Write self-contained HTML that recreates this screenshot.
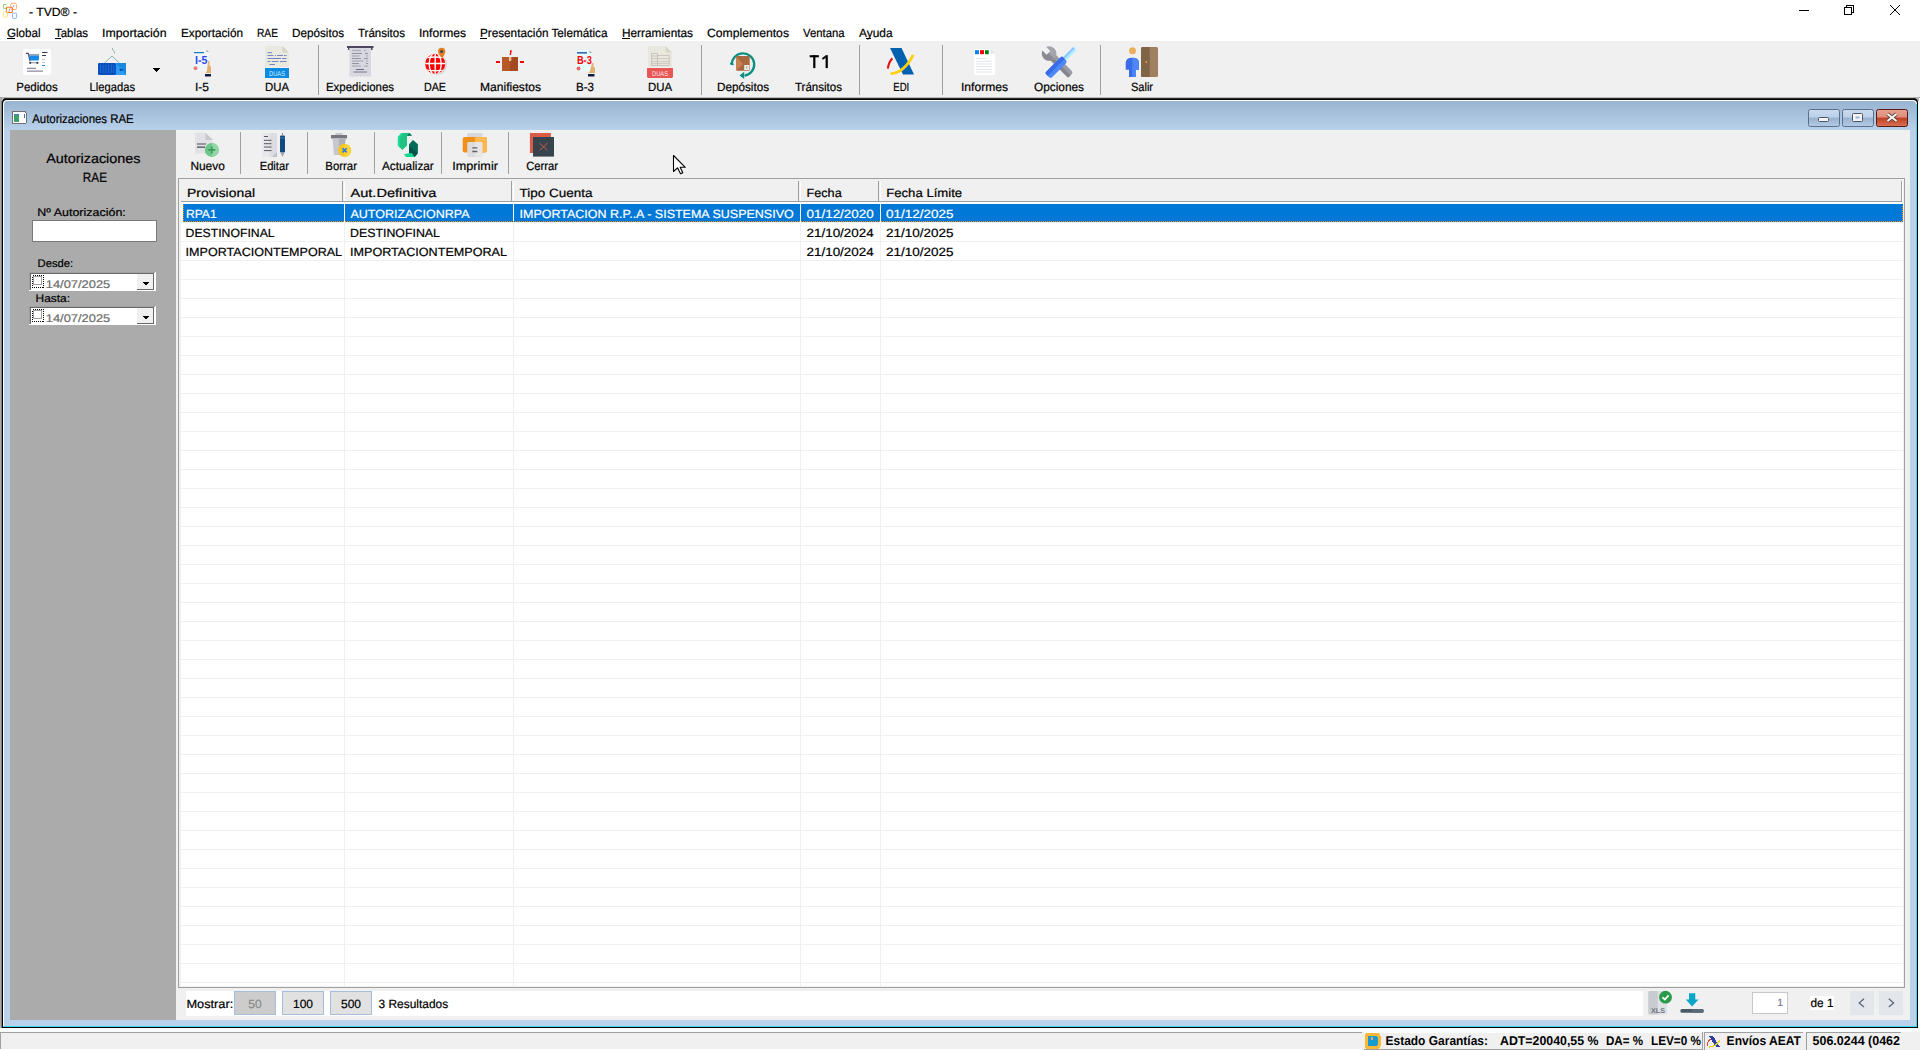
<!DOCTYPE html>
<html><head><meta charset="utf-8"><title>TVD</title>
<style>
html,body{margin:0;padding:0;background:#ababab;overflow:hidden}
svg{display:block;font-family:"Liberation Sans",sans-serif}
</style></head><body>
<svg width="1920" height="1050" viewBox="0 0 1920 1050" shape-rendering="crispEdges" text-rendering="geometricPrecision">
<defs><linearGradient id="cap" x1="0" y1="0" x2="0" y2="1"><stop offset="0" stop-color="#99b4d1"/><stop offset="1" stop-color="#b9d1ea"/></linearGradient><linearGradient id="btnb" x1="0" y1="0" x2="0" y2="1"><stop offset="0" stop-color="#c9dbee"/><stop offset="0.45" stop-color="#bcd0e8"/><stop offset="0.5" stop-color="#98b2cf"/><stop offset="1" stop-color="#b3cbe6"/></linearGradient><linearGradient id="btnr" x1="0" y1="0" x2="0" y2="1"><stop offset="0" stop-color="#e8a291"/><stop offset="0.45" stop-color="#dd8d78"/><stop offset="0.5" stop-color="#c03f1f"/><stop offset="1" stop-color="#d8745a"/></linearGradient></defs>
<rect x="0" y="0" width="1920" height="41" fill="#ffffff" />
<rect x="0" y="41" width="1920" height="56" fill="#f0f0f0" />
<rect x="0" y="97" width="1920" height="953" fill="#ababab" />
<rect x="0" y="97" width="1920" height="1" fill="#a0a0a0" />
<rect x="1918" y="98" width="2" height="932" fill="#ffffff" />
<rect x="1" y="101" width="1" height="927" fill="#808080" />
<g fill="none" stroke-width="0.9" shape-rendering="geometricPrecision"><path d="M6.5 4.5 H3.5 V8.5 H6" stroke="#8ad460"/><rect x="10.8" y="3.3" width="5.6" height="6.2" rx="1.2" stroke="#ffa060"/><rect x="6.5" y="7.3" width="5.8" height="5.2" rx="0.5" stroke="#ff7a30" stroke-width="1.1"/><rect x="3.3" y="11.6" width="4.2" height="5.6" rx="0.8" stroke="#ffe070"/><rect x="12.5" y="13.1" width="4.1" height="5.2" rx="0.6" stroke="#86acf0"/><path d="M13 6 H14.2 M9 9.3 H10 M8.5 11 H9.5" stroke="#555"/></g>
<text x="29" y="16" font-size="12" fill="#000" textLength="48" lengthAdjust="spacingAndGlyphs" stroke="#000" stroke-width="0.2" >- TVD® -</text>
<rect x="1799" y="10" width="10" height="1" fill="#000" />
<g fill="none" stroke="#000" stroke-width="1" shape-rendering="crispEdges"><rect x="1844.5" y="7.5" width="7" height="7"/><path d="M1846.5 7.5 V5.5 H1853.5 V12.5 H1851.5"/></g>
<path d="M1890 5 L1900 15 M1900 5 L1890 15" stroke="#000" stroke-width="1.1"/>
<text x="7" y="37" font-size="12" fill="#000" textLength="33.5" lengthAdjust="spacingAndGlyphs" stroke="#000" stroke-width="0.2" >Global</text>
<text x="55" y="37" font-size="12" fill="#000" textLength="33" lengthAdjust="spacingAndGlyphs" stroke="#000" stroke-width="0.2" >Tablas</text>
<text x="102" y="37" font-size="12" fill="#000" textLength="64.5" lengthAdjust="spacingAndGlyphs" stroke="#000" stroke-width="0.2" >Importación</text>
<text x="181" y="37" font-size="12" fill="#000" textLength="62" lengthAdjust="spacingAndGlyphs" stroke="#000" stroke-width="0.2" >Exportación</text>
<text x="257" y="37" font-size="12" fill="#000" textLength="21" lengthAdjust="spacingAndGlyphs" stroke="#000" stroke-width="0.2" >RAE</text>
<text x="292" y="37" font-size="12" fill="#000" textLength="52" lengthAdjust="spacingAndGlyphs" stroke="#000" stroke-width="0.2" >Depósitos</text>
<text x="358" y="37" font-size="12" fill="#000" textLength="47" lengthAdjust="spacingAndGlyphs" stroke="#000" stroke-width="0.2" >Tránsitos</text>
<text x="419" y="37" font-size="12" fill="#000" textLength="47" lengthAdjust="spacingAndGlyphs" stroke="#000" stroke-width="0.2" >Informes</text>
<text x="480" y="37" font-size="12" fill="#000" textLength="127.5" lengthAdjust="spacingAndGlyphs" stroke="#000" stroke-width="0.2" >Presentación Telemática</text>
<text x="622" y="37" font-size="12" fill="#000" textLength="71" lengthAdjust="spacingAndGlyphs" stroke="#000" stroke-width="0.2" >Herramientas</text>
<text x="707" y="37" font-size="12" fill="#000" textLength="82" lengthAdjust="spacingAndGlyphs" stroke="#000" stroke-width="0.2" >Complementos</text>
<text x="803" y="37" font-size="12" fill="#000" textLength="41.5" lengthAdjust="spacingAndGlyphs" stroke="#000" stroke-width="0.2" >Ventana</text>
<text x="859" y="37" font-size="12" fill="#000" textLength="33.5" lengthAdjust="spacingAndGlyphs" stroke="#000" stroke-width="0.2" >Ayuda</text>
<rect x="7" y="38" width="8" height="1" fill="#000" />
<rect x="55" y="38" width="6" height="1" fill="#000" />
<rect x="480" y="38" width="7" height="1" fill="#000" />
<rect x="622" y="38" width="8" height="1" fill="#000" />
<rect x="866" y="38" width="5" height="1" fill="#000" />
<rect x="318" y="45" width="1" height="50" fill="#a0a0a0" />
<rect x="701" y="45" width="1" height="50" fill="#a0a0a0" />
<rect x="859" y="45" width="1" height="50" fill="#a0a0a0" />
<rect x="942" y="45" width="1" height="50" fill="#a0a0a0" />
<rect x="1100" y="45" width="1" height="50" fill="#a0a0a0" />
<text x="16.25" y="91" font-size="12" fill="#000" textLength="41.5" lengthAdjust="spacingAndGlyphs" stroke="#000" stroke-width="0.2" >Pedidos</text>
<text x="89.6" y="91" font-size="12" fill="#000" textLength="45.4" lengthAdjust="spacingAndGlyphs" stroke="#000" stroke-width="0.2" >Llegadas</text>
<text x="195" y="91" font-size="12" fill="#000" textLength="14" lengthAdjust="spacingAndGlyphs" stroke="#000" stroke-width="0.2" >I-5</text>
<text x="265" y="91" font-size="12" fill="#000" textLength="24" lengthAdjust="spacingAndGlyphs" stroke="#000" stroke-width="0.2" >DUA</text>
<text x="326" y="91" font-size="12" fill="#000" textLength="68" lengthAdjust="spacingAndGlyphs" stroke="#000" stroke-width="0.2" >Expediciones</text>
<text x="424" y="91" font-size="12" fill="#000" textLength="22" lengthAdjust="spacingAndGlyphs" stroke="#000" stroke-width="0.2" >DAE</text>
<text x="480" y="91" font-size="12" fill="#000" textLength="61" lengthAdjust="spacingAndGlyphs" stroke="#000" stroke-width="0.2" >Manifiestos</text>
<text x="576" y="91" font-size="12" fill="#000" textLength="18" lengthAdjust="spacingAndGlyphs" stroke="#000" stroke-width="0.2" >B-3</text>
<text x="648" y="91" font-size="12" fill="#000" textLength="24" lengthAdjust="spacingAndGlyphs" stroke="#000" stroke-width="0.2" >DUA</text>
<text x="717" y="91" font-size="12" fill="#000" textLength="52" lengthAdjust="spacingAndGlyphs" stroke="#000" stroke-width="0.2" >Depósitos</text>
<text x="795" y="91" font-size="12" fill="#000" textLength="47" lengthAdjust="spacingAndGlyphs" stroke="#000" stroke-width="0.2" >Tránsitos</text>
<text x="893.3" y="91" font-size="12" fill="#000" textLength="16" lengthAdjust="spacingAndGlyphs" stroke="#000" stroke-width="0.2" >EDI</text>
<text x="961" y="91" font-size="12" fill="#000" textLength="47" lengthAdjust="spacingAndGlyphs" stroke="#000" stroke-width="0.2" >Informes</text>
<text x="1034" y="91" font-size="12" fill="#000" textLength="50" lengthAdjust="spacingAndGlyphs" stroke="#000" stroke-width="0.2" >Opciones</text>
<text x="1131" y="91" font-size="12" fill="#000" textLength="22" lengthAdjust="spacingAndGlyphs" stroke="#000" stroke-width="0.2" >Salir</text>
<path d="M153 68 H160 L156.5 72 Z" fill="#000"/>
<g shape-rendering="geometricPrecision">
<!-- Pedidos -->
<rect x="23" y="49" width="28" height="26" rx="2" fill="#ffffff"/>
<path d="M26 53.3 H28.3 L30 61" fill="none" stroke="#4a4658" stroke-width="1.2"/>
<rect x="28.7" y="54.2" width="10.3" height="1.3" fill="#8a8a9a"/>
<path d="M29 55.5 H39 V59 Q39 60.6 37.4 60.6 H30 Z" fill="#1b8ae6"/>
<path d="M29.8 62.8 H38" stroke="#8a8a9a" stroke-width="1"/>
<circle cx="30.2" cy="62.8" r="1.1" fill="#3a3550"/>
<circle cx="37.4" cy="62.8" r="1.1" fill="#3a3550"/>
<path d="M42 52.5 H47.5 M42 55.5 H46" stroke="#3a3550" stroke-width="1"/>
<path d="M42 59.5 H45 M42 62.5 H45" stroke="#b8b8c4" stroke-width="0.9"/>
<path d="M42 65.5 H45" stroke="#1b8ae6" stroke-width="1"/>
<path d="M27 68.3 H36 M27 71.2 H43" stroke="#8d8b9c" stroke-width="1.3"/>
<!-- Llegadas -->
<path d="M103 64.5 L112 56 L119.5 63" fill="none" stroke="#8fb4b4" stroke-width="1"/>
<path d="M112.3 48 L112.6 50 L114.3 51.5 L114.5 53.5" fill="none" stroke="#8aa8a8" stroke-width="0.9"/>
<rect x="98" y="63" width="18" height="12" rx="1" fill="#0a50c0"/>
<rect x="116" y="63" width="10" height="12" fill="#2d9cf4"/>
<path d="M116 63 L126 75 V63 Z" fill="#1a88e0"/>
<path d="M100.5 65 V73 M103.2 65 V73 M105.8 65 V73 M108.5 65 V73 M111.5 65 V73 M113.8 65 V73" stroke="#2070d0" stroke-width="0.8"/>
<path d="M119 69 L123 69 L121 71.5 Z" fill="#0a3fb0"/>
<!-- I-5 -->
<path d="M193 49 H206 L209.5 52.5 V71 H193 Z" fill="#eef4f8"/>
<path d="M206.5 49.5 L209 52 H206.5 Z" fill="#a0a8b0"/>
<rect x="194" y="52" width="10" height="1.2" fill="#1e7ac0"/>
<text x="195" y="63.8" font-size="11.6" font-weight="bold" fill="#2a48f0" textLength="12.3" lengthAdjust="spacingAndGlyphs">I-5</text>
<circle cx="195.5" cy="68.3" r="2" fill="#f06060" opacity="0.8"/>
<path d="M208 61 L209.5 61 V66 L211 66.5 V73 H205.5 L207 71 Z" fill="#e2b070"/>
<rect x="205" y="74" width="6" height="2.5" fill="#0d1d40"/>
<!-- DUA 1 -->
<path d="M265 46 H282.4 L289 52.7 V67 H265 Z" fill="#e9e9e0"/>
<path d="M282.4 46 L289 52.7 H282.4 Z" fill="#d8d6c8"/>
<path d="M267.5 52.7 H272 M267.5 55.5 H273.5 M275 55.5 H276 M277 55.5 H283 M284 55.5 H286.5 M267.5 58.5 H281 M282 58.5 H286.5 M267.5 61.5 H270.5 M272 61.5 H278.5 M280 61.5 H286.5 M269.5 64.5 H275" stroke="#7584c4" stroke-width="1"/>
<rect x="265" y="68" width="24" height="10" fill="#0d8ae2"/>
<text x="277" y="76" font-size="7" fill="#d8f0ff" text-anchor="middle" textLength="16" lengthAdjust="spacingAndGlyphs">DUAS</text>
<!-- Expediciones -->
<rect x="347" y="46" width="26.5" height="2" fill="#4e4560"/>
<rect x="348" y="47" width="1.5" height="3" fill="#4e4560"/>
<rect x="371" y="47" width="1.5" height="3" fill="#4e4560"/>
<path d="M349.5 48 H371 V77 L369.5 76 L368 77 L366.5 76 L365 77 L363 76 L361 77 L359 76 L357 77 L355 76 L353 77 L351 76 L349.5 77 Z" fill="#d7d8e0"/>
<path d="M352 50.5 H361 M364 50.5 H366" stroke="#b2b2c0" stroke-width="1.4"/>
<path d="M352 53.5 H362 M365 53.5 H368" stroke="#8e8a9e" stroke-width="0.9"/>
<path d="M352 56 H359.5 M366 56 H368" stroke="#b2b2c0" stroke-width="1.4"/>
<path d="M352 58.5 H361 M364 58.5 H368" stroke="#8e8a9e" stroke-width="0.9"/>
<path d="M352 61 H363.5 M366 61 H368" stroke="#b2b2c0" stroke-width="1.4"/>
<path d="M352 63.5 H359 M366 63.5 H368" stroke="#8e8a9e" stroke-width="0.9"/>
<path d="M352 66 H361 M364.5 66 H368" stroke="#b2b2c0" stroke-width="1.4"/>
<path d="M356 69.5 H364" stroke="#6e6680" stroke-width="1"/>
<path d="M353.5 72 H367" stroke="#a09cb0" stroke-width="1.6"/>
<!-- DAE -->
<circle cx="436.6" cy="64.6" r="10.4" fill="#ccd0d8"/>
<circle cx="435.2" cy="63.9" r="10.6" fill="#ffffff"/>
<clipPath id="glb"><circle cx="435.2" cy="63.9" r="10.1"/></clipPath>
<g clip-path="url(#glb)">
<rect x="424" y="53" width="23" height="22" fill="#ff0000"/>
<g fill="none" stroke="#ffffff" stroke-width="1.4">
<ellipse cx="435.2" cy="63.9" rx="6" ry="11"/>
<path d="M435.2 52 V76 M424 63.5 H447"/>
<path d="M424 58 Q435.2 56 447 58 M424 69.7 Q435.2 71.7 447 69.7"/>
</g>
</g>
<path d="M441.6 47.8 Q445.3 47.8 445.3 51.6 Q445.3 54 442.3 58.2 Q438 54 438 51.6 Q438 47.8 441.6 47.8 Z" fill="#e27e1c"/>
<circle cx="441.65" cy="51.4" r="1.5" fill="#2a4866"/>
<!-- Manifiestos -->
<rect x="502" y="57" width="16" height="14" fill="#b85a28"/>
<rect x="510" y="57" width="8" height="14" fill="#a34a22"/>
<rect x="509.3" y="57" width="1.6" height="4" fill="#ffffff"/>
<rect x="510.5" y="57" width="1.1" height="4" fill="#e88a30"/>
<rect x="496" y="61" width="4" height="2" fill="#ff0000"/>
<rect x="520" y="61" width="4" height="2" fill="#ff0000"/>
<path d="M510 51 L511 51 L510.3 55" stroke="#ff0000" stroke-width="1.4"/>
<!-- B-3 -->
<path d="M576 50 H589 L592.5 53.5 V71 H576 Z" fill="#e6fbfc"/>
<path d="M589.5 50.5 L592 53 H589.5 Z" fill="#a0a8b0"/>
<rect x="577" y="52.2" width="10" height="1.3" fill="#1040a0"/>
<text x="576.9" y="63.9" font-size="11.6" font-weight="bold" fill="#ff0000" textLength="15" lengthAdjust="spacingAndGlyphs">B-3</text>
<circle cx="578.5" cy="68.5" r="2" fill="#f04040" opacity="0.8"/>
<path d="M592 63 L593.5 63 V67 L595 67.5 V73 H588.5 L590 71 Z" fill="#e2b070"/>
<rect x="588" y="74" width="6.5" height="2.5" fill="#0d1d40"/>
<!-- DUA 2 -->
<path d="M648 46 H665.5 L672 52.5 V67 H648 Z" fill="#e8e8de"/>
<path d="M665.5 46 L672 52.5 H665.5 Z" fill="#d8d6c6"/>
<g fill="none" stroke="#c6bcb8" stroke-width="0.8">
<rect x="651.6" y="53.4" width="5.8" height="12"/>
<rect x="657.4" y="55.5" width="11.8" height="9.9"/>
<path d="M651.6 56 H657.4 M651.6 58.6 H669.2 M651.6 61.6 H669.2 M651.6 63.6 H669.2"/>
</g>
<path d="M647 68 H673 V77 L672 78 H648 L647 77 Z" fill="#e85656"/>
<text x="660" y="76" font-size="7" fill="#ffe8e8" text-anchor="middle" textLength="16" lengthAdjust="spacingAndGlyphs">DUAS</text>
<!-- Depositos -->
<path d="M731.8 64.5 A11.2 11.2 0 1 1 744.5 75.6" fill="none" stroke="#0a9080" stroke-width="2.3"/>
<path d="M731.8 64.5 L730.5 62.8 M731.8 64.5 L733.5 63.8" stroke="#0a9080" stroke-width="2"/>
<path d="M739.5 75.6 L744.2 71.8 V79 Z" fill="#0a9080"/>
<rect x="736.2" y="56" width="13.5" height="14.8" rx="1" fill="#a86840"/>
<path d="M736.2 56.5 L743 64 L736.2 70.5 Z" fill="#c88050"/>
<rect x="744.2" y="65" width="5" height="5" fill="#e8f0f0"/>
<path d="M746.7 66 V68.8" stroke="#a06840" stroke-width="0.6"/>
<!-- T1 -->
<rect x="809.7" y="55.2" width="9.2" height="2.1" fill="#000"/>
<rect x="813.2" y="55.2" width="2.2" height="12.9" fill="#000"/>
<rect x="825.6" y="55.2" width="2.2" height="12.9" fill="#000"/>
<path d="M822 58.3 L825.8 55.2 V57.8 L822.8 59.8 Z" fill="#000"/>
<!-- EDI -->
<path d="M890 48 H901.5 L914 74.5 H903 Z" fill="#0060b0"/>
<path d="M890.6 73.6 Q904 73 913.2 54.8" fill="none" stroke="#ffd010" stroke-width="2.8"/>
<path d="M887.8 68.6 Q889 61.5 892.4 58.4" fill="none" stroke="#e01818" stroke-width="2.1"/>
<!-- Informes -->
<path d="M974 49 H990.5 L995 53.5 V75 H974 Z" fill="#ffffff"/>
<path d="M990.5 49 L995 53.5 H990.5 Z" fill="#dfe2ea"/>
<rect x="975" y="50.2" width="4" height="4" fill="#0a80e8"/>
<rect x="980" y="50.2" width="4" height="4" fill="#ff0000"/>
<rect x="985" y="50.2" width="3.8" height="4" fill="#00801a"/>
<path d="M976 58.5 H986 M976 61.3 H992 M976 64 H992 M976 66.6 H992 M976 69.4 H992 M976 72 H992" stroke="#e0e2ea" stroke-width="0.9"/>
<!-- Opciones -->
<g transform="translate(1057.3 61.7) rotate(-45)">
<rect x="-3.8" y="-8" width="7.6" height="27" rx="2.5" fill="#9c9ca6"/>
<rect x="-3.8" y="-8" width="3.8" height="27" fill="#85858f"/>
<circle cx="0" cy="-11.5" r="7.3" fill="#a4a4ae"/>
<path d="M0 -18.8 A7.3 7.3 0 0 0 0 -4.2 Z" fill="#8a8a94"/>
<rect x="-2.6" y="-20" width="5.2" height="7.5" fill="#f0f0f0"/>
</g>
<g transform="translate(1061.2 62.4) rotate(45)">
<rect x="-2.4" y="-19.5" width="4.8" height="16" fill="#b4f0ff"/>
<rect x="-2.4" y="-19.5" width="2.4" height="16" fill="#90c8ff"/>
<rect x="-4" y="-5" width="8" height="24" rx="2.5" fill="#4c88f8"/>
<rect x="-4" y="-5" width="4" height="24" rx="1" fill="#3a6ce8"/>
</g>
<!-- Salir -->
<circle cx="1132.5" cy="50.8" r="3.5" fill="#eab060"/>
<path d="M1125.7 63 Q1125.7 57.8 1132.3 57.8 Q1139 57.8 1139 63 V69.8 H1136 V77 H1129 V69.8 H1125.7 Z" fill="#3a6ce8"/>
<path d="M1132.3 57.8 Q1139 57.8 1139 63 V69.8 H1136 V77 H1132.3 Z" fill="#4c86f8"/>
<rect x="1141" y="47" width="17" height="30" rx="1.5" fill="#a08060"/>
<path d="M1142.5 47 H1149.7 V77 H1142.5 Q1141 77 1141 75.5 V48.5 Q1141 47 1142.5 47 Z" fill="#7f6446"/>
<circle cx="1146.3" cy="62" r="0.9" fill="#f0a040"/>
</g>

<rect x="2" y="97" width="1917" height="4" fill="#b4b4b4" />
<path d="M2 1028 V103 Q2 98 7 98 H1913 Q1918 98 1918 103 V1028 Z" fill="#000000" shape-rendering="geometricPrecision"/>
<rect x="6" y="98" width="1908" height="1" fill="#303030" />
<path d="M3 1027 V104 Q3 100 7 100 H1913 Q1917 100 1917 104 V1027 Z" fill="#ffffff" shape-rendering="geometricPrecision"/>
<path d="M4 1026 V105 Q4 101 8 101 H1912 Q1916 101 1916 105 V1026 Z" fill="#b9d1ea" shape-rendering="geometricPrecision"/>
<rect x="1916" y="104" width="1" height="923" fill="#3ad6f0" />
<rect x="3" y="1026" width="1914" height="1" fill="#3ad6f0" />
<path d="M4 130 V105 Q4 101 8 101 H1912 Q1916 101 1916 105 V130 Z" fill="url(#cap)" shape-rendering="geometricPrecision"/>
<rect x="12.5" y="111.5" width="13.5" height="12" fill="#ffffff" stroke="#707070" rx="1"/><rect x="13.8" y="114" width="5" height="7.6" fill="#3da06a"/><rect x="13.8" y="114" width="5" height="1" fill="#4a80c0"/><rect x="24" y="114" width="0.8" height="3.5" fill="#3a70c0"/>
<text x="32.2" y="123" font-size="12.5" fill="#000" textLength="101.5" lengthAdjust="spacingAndGlyphs" stroke="#000" stroke-width="0.2" >Autorizaciones RAE</text>
<g shape-rendering="geometricPrecision"><rect x="1808.5" y="109.5" width="31" height="17" rx="2" fill="url(#btnb)" stroke="#5b6f8e"/><rect x="1842.5" y="109.5" width="31" height="17" rx="2" fill="url(#btnb)" stroke="#5b6f8e"/><rect x="1876.5" y="109.5" width="31" height="17" rx="2" fill="url(#btnr)" stroke="#5a1a1a"/><rect x="1818.5" y="117.5" width="10" height="4" rx="1" fill="#f4f4f4" stroke="#4a556a"/><rect x="1852.5" y="113.5" width="10" height="8" rx="1" fill="#f4f4f4" stroke="#4a556a"/><rect x="1855.5" y="116.5" width="4" height="2" fill="#9ab4d6"/><path d="M1887.5 114 L1896.5 121 M1896.5 114 L1887.5 121" stroke="#5a3a3a" stroke-width="3.6"/><path d="M1887.5 114 L1896.5 121 M1896.5 114 L1887.5 121" stroke="#f4f4f4" stroke-width="2.2"/></g>
<rect x="10" y="130" width="1900" height="890" fill="#f0f0f0" />
<rect x="10" y="130" width="166" height="890" fill="#ababab" />
<text x="46.2" y="162.5" font-size="13.5" fill="#000" textLength="94.3" lengthAdjust="spacingAndGlyphs" stroke="#000" stroke-width="0.2" >Autorizaciones</text>
<text x="82.8" y="182" font-size="13.5" fill="#000" textLength="24.2" lengthAdjust="spacingAndGlyphs" stroke="#000" stroke-width="0.2" >RAE</text>
<text x="37.3" y="215.5" font-size="11" fill="#000" textLength="88.5" lengthAdjust="spacingAndGlyphs" stroke="#000" stroke-width="0.2" >Nº Autorización:</text>
<rect x="32" y="220" width="125" height="22" fill="#7a7a7a" />
<rect x="33" y="221" width="123" height="20" fill="#ffffff" />
<text x="37.6" y="267" font-size="11" fill="#000" textLength="35.5" lengthAdjust="spacingAndGlyphs" stroke="#000" stroke-width="0.2" >Desde:</text>
<text x="35.6" y="302" font-size="11" fill="#000" textLength="34.4" lengthAdjust="spacingAndGlyphs" stroke="#000" stroke-width="0.2" >Hasta:</text>
<rect x="29" y="272" width="127" height="19" fill="#ffffff" />
<rect x="29" y="272" width="126" height="1" fill="#a0a0a0" />
<rect x="29" y="272" width="1" height="18" fill="#a0a0a0" />
<rect x="30" y="273" width="124" height="1" fill="#696969" />
<rect x="30" y="273" width="1" height="17" fill="#696969" />
<rect x="31" y="274" width="123" height="16" fill="#ffffff" />
<rect x="32.5" y="275.5" width="11" height="12" fill="none" stroke="#000" stroke-dasharray="1 1"/>
<rect x="33.5" y="276.5" width="8" height="8" fill="#ffffff" stroke="#a0a0a0"/>
<text x="45.8" y="288" font-size="11" fill="#6d6d6d" textLength="64.4" lengthAdjust="spacingAndGlyphs" stroke="#6d6d6d" stroke-width="0.2" >14/07/2025</text>
<rect x="137" y="274" width="17" height="16" fill="#f0f0f0" />
<rect x="153" y="274" width="1" height="16" fill="#696969" />
<rect x="137" y="289" width="17" height="1" fill="#696969" />
<path d="M142.5 282 H149.5 L146 285 Z" fill="#000"/>
<rect x="29" y="306" width="127" height="19" fill="#ffffff" />
<rect x="29" y="306" width="126" height="1" fill="#a0a0a0" />
<rect x="29" y="306" width="1" height="18" fill="#a0a0a0" />
<rect x="30" y="307" width="124" height="1" fill="#696969" />
<rect x="30" y="307" width="1" height="17" fill="#696969" />
<rect x="31" y="308" width="123" height="16" fill="#ffffff" />
<rect x="32.5" y="309.5" width="11" height="12" fill="none" stroke="#000" stroke-dasharray="1 1"/>
<rect x="33.5" y="310.5" width="8" height="8" fill="#ffffff" stroke="#a0a0a0"/>
<text x="45.8" y="322" font-size="11" fill="#6d6d6d" textLength="64.4" lengthAdjust="spacingAndGlyphs" stroke="#6d6d6d" stroke-width="0.2" >14/07/2025</text>
<rect x="137" y="308" width="17" height="16" fill="#f0f0f0" />
<rect x="153" y="308" width="1" height="16" fill="#696969" />
<rect x="137" y="323" width="17" height="1" fill="#696969" />
<path d="M142.5 316 H149.5 L146 319 Z" fill="#000"/>
<rect x="240" y="132" width="1" height="42" fill="#a0a0a0" />
<rect x="307" y="132" width="1" height="42" fill="#a0a0a0" />
<rect x="374" y="132" width="1" height="42" fill="#a0a0a0" />
<rect x="441" y="132" width="1" height="42" fill="#a0a0a0" />
<rect x="508" y="132" width="1" height="42" fill="#a0a0a0" />
<text x="190.4" y="170" font-size="12" fill="#000" textLength="34.4" lengthAdjust="spacingAndGlyphs" stroke="#000" stroke-width="0.2" >Nuevo</text>
<text x="259.7" y="170" font-size="12" fill="#000" textLength="29.2" lengthAdjust="spacingAndGlyphs" stroke="#000" stroke-width="0.2" >Editar</text>
<text x="325.3" y="170" font-size="12" fill="#000" textLength="31.7" lengthAdjust="spacingAndGlyphs" stroke="#000" stroke-width="0.2" >Borrar</text>
<text x="382" y="170" font-size="12" fill="#000" textLength="51.75" lengthAdjust="spacingAndGlyphs" stroke="#000" stroke-width="0.2" >Actualizar</text>
<text x="452.3" y="170" font-size="12" fill="#000" textLength="45.6" lengthAdjust="spacingAndGlyphs" stroke="#000" stroke-width="0.2" >Imprimir</text>
<text x="526.25" y="170" font-size="12" fill="#000" textLength="31.75" lengthAdjust="spacingAndGlyphs" stroke="#000" stroke-width="0.2" >Cerrar</text>
<g shape-rendering="geometricPrecision">
<!-- Nuevo -->
<path d="M195 132.7 H205.5 L212.8 140 V153.5 H195 Z" fill="#e2e2e6"/>
<path d="M205.5 132.7 L212.8 140 H205.5 Z" fill="#c8c8ce"/>
<path d="M197 144 H206 M197 147.2 H205" stroke="#4a4a50" stroke-width="1.2"/>
<circle cx="211.8" cy="149.9" r="7" fill="#6cc58a"/>
<path d="M211.8 142.9 A7 7 0 0 1 211.8 156.9 Z" fill="#92d6a6"/>
<path d="M208.3 149.9 H215.3 M211.8 146.4 V153.4" stroke="#3b9a5a" stroke-width="1.6"/>
<!-- Editar -->
<rect x="262" y="133" width="15" height="24" fill="#e8e8ec"/>
<rect x="269.5" y="133" width="7.5" height="24" fill="#dcdce2"/>
<path d="M272 157 L277 152 V157 Z" fill="#c0c0c8"/>
<path d="M264 136.5 H268 M264 140.3 H271.5 M264 143.7 H271.5 M264 147 H271.5 M264 150.6 H271.5" stroke="#55555e" stroke-width="1"/>
<rect x="280" y="135.5" width="5" height="17" rx="1" fill="#124a80"/>
<rect x="280" y="137.5" width="5" height="1" fill="#3a78b0"/>
<path d="M282.5 133 V135.5" stroke="#8a8a94" stroke-width="1"/>
<path d="M280.5 152.5 L282.5 157 L284.5 152.5 Z" fill="#9aa0aa"/>
<!-- Borrar -->
<rect x="331" y="135" width="16" height="3.5" fill="#76767f"/>
<rect x="335.5" y="133" width="7" height="2" fill="#c8c8d0"/>
<path d="M332.5 138.5 H345.5 L344 155 H334 Z" fill="#c6c6cc"/>
<path d="M339 138.5 H345.5 L344 155 H339 Z" fill="#b0b0b8"/>
<circle cx="344.6" cy="150.3" r="6.5" fill="#f6c81a"/>
<path d="M344.6 143.8 A6.5 6.5 0 0 1 344.6 156.8 Z" fill="#ffd43a"/>
<path d="M342.5 148.2 L346.7 152.4 M346.7 148.2 L342.5 152.4" stroke="#2a78e8" stroke-width="1.6"/>
<!-- Actualizar -->
<path d="M401.4 132.9 H409.4 L412 135.6 L407 136 V145.4 L402.4 150 L397.9 145.4 V137.1 Z" fill="#22c282"/>
<path d="M401.4 132.9 H403.5 L400 138 V148 L397.9 145.4 V137.1 Z" fill="#18dc98"/>
<path d="M407 136 L409.4 132.9 L412 135.6 Z" fill="#0a6a58"/>
<path d="M413 139.9 L417.9 144.3 V152.6 L414.6 156.9 L409.1 154 V144.3 Z" fill="#046a5a"/>
<path d="M409.1 146 L417.9 153.5 L414.6 156.9 L409.1 154 Z" fill="#035248"/>
<path d="M404 154 L411.7 153.1 L414.6 156.9 H406 Z" fill="#12d890"/>
<!-- Imprimir -->
<rect x="467" y="133" width="15.5" height="5" rx="1.5" fill="#d8d8dc"/>
<rect x="462.7" y="137" width="24.2" height="15.5" rx="2" fill="#f09018"/>
<rect x="474.8" y="137" width="12.1" height="15.5" rx="2" fill="#ffb850"/>
<rect x="467.3" y="142" width="15" height="15" rx="1" fill="#dcdcdc"/>
<rect x="474.8" y="142" width="7.5" height="15" rx="1" fill="#e6e6e6"/>
<path d="M472.3 147.8 H477.3 M472.3 151.5 H477.3" stroke="#606068" stroke-width="1.3"/>
<!-- Cerrar -->
<rect x="529.9" y="133" width="21" height="20" fill="#d85c48"/>
<rect x="533" y="137" width="21" height="19.6" fill="#37444e"/>
<path d="M539.5 143 L547.5 150.6 M547.5 143 L539.5 150.6" stroke="#d85c48" stroke-width="0.9"/>
</g>

<rect x="178" y="178" width="1727" height="810" fill="#a0a0a0" />
<rect x="179" y="179" width="1725" height="808" fill="#f0f0f0" />
<rect x="181" y="181" width="1722" height="805" fill="#ffffff" />
<rect x="181" y="181" width="1721" height="20" fill="#f0f0f0" />
<rect x="181" y="201" width="1721" height="1" fill="#a0a0a0" />
<rect x="342" y="181" width="1" height="21" fill="#a0a0a0" />
<rect x="511" y="181" width="1" height="21" fill="#a0a0a0" />
<rect x="798" y="181" width="1" height="21" fill="#a0a0a0" />
<rect x="878" y="181" width="1" height="21" fill="#a0a0a0" />
<rect x="1901" y="181" width="1" height="21" fill="#a0a0a0" />
<rect x="344" y="182" width="1" height="19" fill="#ffffff" />
<rect x="513" y="182" width="1" height="19" fill="#ffffff" />
<rect x="800" y="182" width="1" height="19" fill="#ffffff" />
<rect x="880" y="182" width="1" height="19" fill="#ffffff" />
<text x="187" y="197" font-size="12" fill="#000" textLength="68" lengthAdjust="spacingAndGlyphs" stroke="#000" stroke-width="0.2" >Provisional</text>
<text x="350.5" y="197" font-size="12" fill="#000" textLength="85.8" lengthAdjust="spacingAndGlyphs" stroke="#000" stroke-width="0.2" >Aut.Definitiva</text>
<text x="519.5" y="197" font-size="12" fill="#000" textLength="72.9" lengthAdjust="spacingAndGlyphs" stroke="#000" stroke-width="0.2" >Tipo Cuenta</text>
<text x="806.5" y="197" font-size="12" fill="#000" textLength="35.2" lengthAdjust="spacingAndGlyphs" stroke="#000" stroke-width="0.2" >Fecha</text>
<text x="886.2" y="197" font-size="12" fill="#000" textLength="76" lengthAdjust="spacingAndGlyphs" stroke="#000" stroke-width="0.2" >Fecha Límite</text>
<rect x="181" y="202" width="1722" height="2" fill="#ffffff" />
<rect x="181" y="222" width="1722" height="1" fill="#f0f0f0" />
<rect x="181" y="241" width="1722" height="1" fill="#f0f0f0" />
<rect x="181" y="260" width="1722" height="1" fill="#f0f0f0" />
<rect x="181" y="279" width="1722" height="1" fill="#f0f0f0" />
<rect x="181" y="298" width="1722" height="1" fill="#f0f0f0" />
<rect x="181" y="317" width="1722" height="1" fill="#f0f0f0" />
<rect x="181" y="336" width="1722" height="1" fill="#f0f0f0" />
<rect x="181" y="355" width="1722" height="1" fill="#f0f0f0" />
<rect x="181" y="374" width="1722" height="1" fill="#f0f0f0" />
<rect x="181" y="393" width="1722" height="1" fill="#f0f0f0" />
<rect x="181" y="412" width="1722" height="1" fill="#f0f0f0" />
<rect x="181" y="431" width="1722" height="1" fill="#f0f0f0" />
<rect x="181" y="450" width="1722" height="1" fill="#f0f0f0" />
<rect x="181" y="469" width="1722" height="1" fill="#f0f0f0" />
<rect x="181" y="488" width="1722" height="1" fill="#f0f0f0" />
<rect x="181" y="507" width="1722" height="1" fill="#f0f0f0" />
<rect x="181" y="526" width="1722" height="1" fill="#f0f0f0" />
<rect x="181" y="545" width="1722" height="1" fill="#f0f0f0" />
<rect x="181" y="564" width="1722" height="1" fill="#f0f0f0" />
<rect x="181" y="583" width="1722" height="1" fill="#f0f0f0" />
<rect x="181" y="602" width="1722" height="1" fill="#f0f0f0" />
<rect x="181" y="621" width="1722" height="1" fill="#f0f0f0" />
<rect x="181" y="640" width="1722" height="1" fill="#f0f0f0" />
<rect x="181" y="659" width="1722" height="1" fill="#f0f0f0" />
<rect x="181" y="678" width="1722" height="1" fill="#f0f0f0" />
<rect x="181" y="697" width="1722" height="1" fill="#f0f0f0" />
<rect x="181" y="716" width="1722" height="1" fill="#f0f0f0" />
<rect x="181" y="735" width="1722" height="1" fill="#f0f0f0" />
<rect x="181" y="754" width="1722" height="1" fill="#f0f0f0" />
<rect x="181" y="773" width="1722" height="1" fill="#f0f0f0" />
<rect x="181" y="792" width="1722" height="1" fill="#f0f0f0" />
<rect x="181" y="811" width="1722" height="1" fill="#f0f0f0" />
<rect x="181" y="830" width="1722" height="1" fill="#f0f0f0" />
<rect x="181" y="849" width="1722" height="1" fill="#f0f0f0" />
<rect x="181" y="868" width="1722" height="1" fill="#f0f0f0" />
<rect x="181" y="887" width="1722" height="1" fill="#f0f0f0" />
<rect x="181" y="906" width="1722" height="1" fill="#f0f0f0" />
<rect x="181" y="925" width="1722" height="1" fill="#f0f0f0" />
<rect x="181" y="944" width="1722" height="1" fill="#f0f0f0" />
<rect x="181" y="963" width="1722" height="1" fill="#f0f0f0" />
<rect x="181" y="982" width="1722" height="1" fill="#f0f0f0" />
<rect x="344" y="204" width="1" height="783" fill="#f0f0f0" />
<rect x="513" y="204" width="1" height="783" fill="#f0f0f0" />
<rect x="800" y="204" width="1" height="783" fill="#f0f0f0" />
<rect x="880" y="204" width="1" height="783" fill="#f0f0f0" />
<rect x="183" y="204" width="1720" height="18" fill="#0078d7" />
<rect x="344" y="204" width="1" height="18" fill="#ffffff" />
<rect x="513" y="204" width="1" height="18" fill="#ffffff" />
<rect x="800" y="204" width="1" height="18" fill="#ffffff" />
<rect x="880" y="204" width="1" height="18" fill="#ffffff" />
<path d="M183.5 205 V221.5 H1902.5 V205" fill="none" stroke="#ff8c00" stroke-dasharray="1 1" shape-rendering="crispEdges"/>
<text x="185.9" y="218" font-size="12" fill="#ffffff" textLength="30.8" lengthAdjust="spacingAndGlyphs" stroke="#ffffff" stroke-width="0.2" >RPA1</text>
<text x="350.4" y="218" font-size="12" fill="#ffffff" textLength="119.1" lengthAdjust="spacingAndGlyphs" stroke="#ffffff" stroke-width="0.2" >AUTORIZACIONRPA</text>
<text x="519.5" y="218" font-size="12" fill="#ffffff" textLength="274.2" lengthAdjust="spacingAndGlyphs" stroke="#ffffff" stroke-width="0.2" >IMPORTACION R.P..A - SISTEMA SUSPENSIVO</text>
<text x="806.5" y="218" font-size="12" fill="#ffffff" textLength="67.2" lengthAdjust="spacingAndGlyphs" stroke="#ffffff" stroke-width="0.2" >01/12/2020</text>
<text x="886" y="218" font-size="12" fill="#ffffff" textLength="67.4" lengthAdjust="spacingAndGlyphs" stroke="#ffffff" stroke-width="0.2" >01/12/2025</text>
<text x="185.6" y="237" font-size="12" fill="#000000" textLength="89" lengthAdjust="spacingAndGlyphs" stroke="#000000" stroke-width="0.2" >DESTINOFINAL</text>
<text x="350" y="237" font-size="12" fill="#000000" textLength="90" lengthAdjust="spacingAndGlyphs" stroke="#000000" stroke-width="0.2" >DESTINOFINAL</text>
<text x="806.5" y="237" font-size="12" fill="#000000" textLength="67.2" lengthAdjust="spacingAndGlyphs" stroke="#000000" stroke-width="0.2" >21/10/2024</text>
<text x="886" y="237" font-size="12" fill="#000000" textLength="67.4" lengthAdjust="spacingAndGlyphs" stroke="#000000" stroke-width="0.2" >21/10/2025</text>
<text x="185.6" y="256" font-size="12" fill="#000000" textLength="156.5" lengthAdjust="spacingAndGlyphs" stroke="#000000" stroke-width="0.2" >IMPORTACIONTEMPORAL</text>
<text x="350" y="256" font-size="12" fill="#000000" textLength="157" lengthAdjust="spacingAndGlyphs" stroke="#000000" stroke-width="0.2" >IMPORTACIONTEMPORAL</text>
<text x="806.5" y="256" font-size="12" fill="#000000" textLength="67.2" lengthAdjust="spacingAndGlyphs" stroke="#000000" stroke-width="0.2" >21/10/2024</text>
<text x="886" y="256" font-size="12" fill="#000000" textLength="67.4" lengthAdjust="spacingAndGlyphs" stroke="#000000" stroke-width="0.2" >21/10/2025</text>
<rect x="186" y="991" width="1457" height="25" fill="#ffffff" />
<text x="186.4" y="1007.5" font-size="12" fill="#000" textLength="46.9" lengthAdjust="spacingAndGlyphs" stroke="#000" stroke-width="0.2" >Mostrar:</text>
<rect x="234" y="991" width="42" height="24" fill="#a7bfdc" />
<rect x="235" y="992" width="40" height="22" fill="#cccccc" />
<text x="255.0" y="1007.5" font-size="12" fill="#8a8a8a" text-anchor="middle" stroke="#8a8a8a" stroke-width="0.2" >50</text>
<rect x="282" y="991" width="42" height="24" fill="#a7bfdc" />
<rect x="283" y="992" width="40" height="22" fill="#e1e1e1" />
<text x="303.0" y="1007.5" font-size="12" fill="#000" text-anchor="middle" stroke="#000" stroke-width="0.2" >100</text>
<rect x="330" y="991" width="42" height="24" fill="#a7bfdc" />
<rect x="331" y="992" width="40" height="22" fill="#e1e1e1" />
<text x="351.0" y="1007.5" font-size="12" fill="#000" text-anchor="middle" stroke="#000" stroke-width="0.2" >500</text>
<text x="378.6" y="1007.5" font-size="12" fill="#000" textLength="69.5" lengthAdjust="spacingAndGlyphs" stroke="#000" stroke-width="0.2" >3 Resultados</text>
<g shape-rendering="geometricPrecision">
<rect x="1648.3" y="991" width="18.7" height="23.4" rx="1.5" fill="#dde0e4"/>
<path d="M1649.8 991 H1657.7 V1014.4 H1649.8 Q1648.3 1014.4 1648.3 1012.9 V992.5 Q1648.3 991 1649.8 991 Z" fill="#c8ccd0"/>
<text x="1651" y="1013.2" font-size="7" font-weight="bold" fill="#6a737c" textLength="14" lengthAdjust="spacingAndGlyphs">XLS</text>
<circle cx="1665.5" cy="997.2" r="6.4" fill="#2a9a48"/>
<path d="M1662.5 997.3 L1664.8 999.5 L1668.6 995.3" fill="none" stroke="#ffffff" stroke-width="1.8"/>
<path d="M1689 993.3 H1695.3 V999.5 H1698.5 L1692.1 1006.6 L1685.8 999.5 H1689 Z" fill="#0aa6c8"/>
<rect x="1680.3" y="1008.9" width="23.4" height="3.9" rx="1.9" fill="#4a5a68"/>
<rect x="1692" y="1008.9" width="11.7" height="3.9" rx="1.9" fill="#5a6c7a"/>
</g>

<rect x="1752" y="992" width="36" height="22" fill="#c8c8c8" />
<rect x="1753" y="993" width="34" height="20" fill="#ffffff" />
<text x="1783" y="1006" font-size="10.5" fill="#7a7a9a" text-anchor="end" stroke="#7a7a9a" stroke-width="0.2" >1</text>
<rect x="1810" y="996" width="24" height="14" fill="#ffffff" />
<text x="1810.5" y="1006.8" font-size="12" fill="#000" textLength="23" lengthAdjust="spacingAndGlyphs" stroke="#000" stroke-width="0.2" >de 1</text>
<rect x="1850" y="991" width="24" height="24" fill="#e3e7eb" />
<rect x="1879" y="991" width="24" height="24" fill="#e3e7eb" />
<path d="M1864 998.8 L1859.2 1002.9 L1864 1007" fill="none" stroke="#5a6b7d" stroke-width="1.3" shape-rendering="geometricPrecision"/>
<path d="M1888.8 998.8 L1893.6 1002.9 L1888.8 1007" fill="none" stroke="#5a6b7d" stroke-width="1.3" shape-rendering="geometricPrecision"/>
<rect x="0" y="1028" width="1920" height="22" fill="#f0f0f0" />
<rect x="0" y="1028" width="1920" height="4" fill="#fafafa" />
<rect x="0" y="1032" width="1362" height="1" fill="#a0a0a0" />
<rect x="0" y="1032" width="1" height="18" fill="#a0a0a0" />
<rect x="0" y="1049" width="1362" height="1" fill="#ffffff" />
<rect x="1364" y="1032" width="339" height="1" fill="#ffffff" />
<rect x="1364" y="1049" width="339" height="1" fill="#a0a0a0" />
<rect x="1702" y="1032" width="1" height="18" fill="#a0a0a0" />
<rect x="1704" y="1032" width="99" height="1" fill="#a0a0a0" />
<rect x="1704" y="1032" width="1" height="18" fill="#a0a0a0" />
<rect x="1806" y="1032" width="95" height="1" fill="#a0a0a0" />
<rect x="1806" y="1032" width="1" height="18" fill="#a0a0a0" />
<rect x="1365" y="1033" width="15.5" height="16" rx="3" fill="#fbb937"/><rect x="1368" y="1036" width="9.5" height="10" rx="1" fill="#1a9bd0"/><circle cx="1372" cy="1038.5" r="1.2" fill="#f5a06a"/>
<path d="M1709 1036 L1713 1036 L1720 1047 L1716 1047 Z" fill="#2c3fa0"/><path d="M1707 1046 Q1708 1040 1711 1039" fill="none" stroke="#e04040" stroke-width="1"/><path d="M1709 1047 Q1716 1047 1720 1040" fill="none" stroke="#f0d020" stroke-width="1.2"/>
<text x="1385.5" y="1044.8" font-size="12.8" fill="#000" font-weight="bold" textLength="102.5" lengthAdjust="spacingAndGlyphs" >Estado Garantías:</text>
<text x="1500" y="1044.8" font-size="12.8" fill="#000" font-weight="bold" textLength="98.5" lengthAdjust="spacingAndGlyphs" >ADT=20040,55 %</text>
<text x="1606" y="1044.8" font-size="12.8" fill="#000" font-weight="bold" textLength="37" lengthAdjust="spacingAndGlyphs" >DA= %</text>
<text x="1651" y="1044.8" font-size="12.8" fill="#000" font-weight="bold" textLength="50" lengthAdjust="spacingAndGlyphs" >LEV=0 %</text>
<text x="1726.6" y="1044.8" font-size="12.8" fill="#000" font-weight="bold" textLength="74.4" lengthAdjust="spacingAndGlyphs" >Envíos AEAT</text>
<text x="1812.5" y="1044.8" font-size="12.8" fill="#000" font-weight="bold" textLength="87.5" lengthAdjust="spacingAndGlyphs" >506.0244 (0462</text>
<path d="M673.5 155.5 V171.5 L677.5 167.8 L680.5 173.8 L682.8 172.8 L680.2 167.3 H685.3 Z" fill="#ffffff" stroke="#000" stroke-width="1.1" stroke-linejoin="round" shape-rendering="geometricPrecision"/>
</svg>
</body></html>
